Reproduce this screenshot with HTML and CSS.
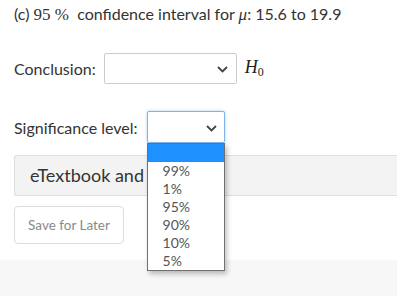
FILE: index.html
```html
<!DOCTYPE html>
<html>
<head>
<meta charset="utf-8">
<link rel="stylesheet" href="styles.css">
</head>
<body>
<div class="content">
  <p class="q">(c) <span class="math">95 %</span>&nbsp; confidence interval for <span class="math it">μ</span>: 15.6 to 19.9</p>
  <div class="row r1">
    <span class="label">Conclusion:</span>
    <div class="select sel1">
      <svg class="chev" width="11" height="7" viewBox="0 0 11 7"><path d="M1 1 L5.5 5.5 L10 1" fill="none" stroke="#444" stroke-width="1.8"/></svg>
    </div>
    <span class="math it h0">H<sub>0</sub></span>
  </div>
  <div class="row r2">
    <span class="label">Significance level:</span>
    <div class="select sel2 focus">
      <svg class="chev" width="11" height="7" viewBox="0 0 11 7"><path d="M1 1 L5.5 5.5 L10 1" fill="none" stroke="#444" stroke-width="1.8"/></svg>
      <ul class="menu">
        <li class="hi">&nbsp;</li>
        <li>99%</li>
        <li>1%</li>
        <li>95%</li>
        <li>90%</li>
        <li>10%</li>
        <li>5%</li>
      </ul>
    </div>
  </div>
  <div class="media">eTextbook and Media</div>
  <button class="save">Save for Later</button>
</div>
<div class="footer"></div>
</body>
</html>
```
FILE: styles.css
```css
html, body { margin: 0; padding: 0; background: #fff; }
body { font-family: Lato, "Open Sans", sans-serif; color: #333; overflow: hidden; width: 397px; height: 296px; }
.content { padding: 4px 0 0 14px; height: 260px; box-sizing: border-box; }
.q { margin: 0; font-size: 16px; line-height: 20px; color: #333; white-space: nowrap; }
.math { font-family: "Liberation Serif", "DejaVu Serif", serif; font-size: 17px; }
.it { font-style: italic; }
.row { display: flex; align-items: center; }
.r1 { margin-top: 28px; height: 31px; }
.r2 { margin-top: 27px; height: 32px; }
.label { font-size: 16px; color: #333; }
.select { position: relative; box-sizing: border-box; border: 1px solid #ccc; border-radius: 2px; background: #fff; height: 100%; }
.sel1 { width: 133px; margin-left: 8px; }
.sel2 { width: 78px; margin-left: 9px; }
.focus { border-color: #7fb6ec; box-shadow: 0 0 3px rgba(80,150,230,0.5); }
.chev { position: absolute; top: 12px; }
.sel1 .chev { left: 112px; }
.sel2 .chev { left: 58px; top: 13px; }
.h0 { margin-left: 8px; font-size: 18px; color: #222; }
.h0 sub { font-style: normal; font-size: 12px; vertical-align: -3px; }
.menu { position: absolute; left: -1px; top: 31px; width: 78px; box-sizing: border-box; margin: 0; padding: 0; list-style: none; background: #fff; border: 1px solid #707070; box-shadow: 2px 3px 5px rgba(0,0,0,0.25); z-index: 5; }
.menu li { height: 18px; line-height: 18px; font-size: 14px; color: #555; padding-left: 15px; }
.menu li.hi { background: #1e90ff; }
.media { margin-top: 12px; height: 41px; box-sizing: border-box; border: 1px solid #dedede; border-right: none; border-radius: 3px 0 0 3px; background: #f3f3f3; font-size: 18px; line-height: 39px; padding-left: 15px; color: #333; white-space: nowrap; }
.save { display: block; margin-top: 10px; width: 110px; height: 38px; border: 1px solid #ddd; border-radius: 4px; background: #fff; font-family: Lato, sans-serif; font-size: 13.5px; color: #8a8a8a; padding: 0; }
.footer { height: 36px; background: #f7f7f7; }
```
